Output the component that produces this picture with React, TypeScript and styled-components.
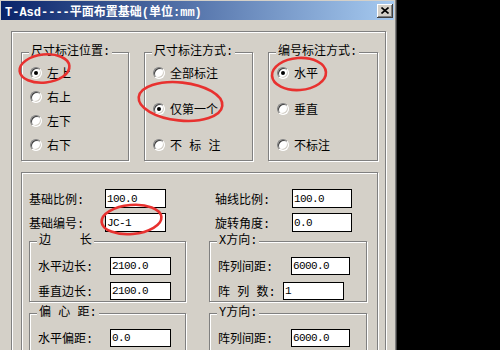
import React from 'react'
import styled, { createGlobalStyle, css } from 'styled-components'

const face = '#d4d0c8'

const etched = css`
	border: 1px solid #808080;
	box-shadow: inset 1px 1px 0 #fff, 1px 1px 0 #fff;
`

const GlobalStyle = createGlobalStyle`
	html, body {
		margin: 0;
		padding: 0;
		background: #000;
	}
	body {
		width: 500px;
		height: 350px;
		overflow: hidden;
		font-family: "Liberation Mono", "Noto Sans CJK SC", monospace;
		font-size: 12px;
		color: #000;
	}
`

const Window = styled.div`
	position: relative;
	box-sizing: border-box;
	width: 397px;
	height: 350px;
	padding: 1px 2px 0 1px;
	background: ${face};
	border-right: 1px solid #404040;
	box-shadow: inset -1px 0 0 #808080;
	overflow: hidden;
`

const TitleBar = styled.div`
	display: flex;
	align-items: center;
	justify-content: space-between;
	height: 19px;
	padding: 0 1px 0 4px;
	background: linear-gradient(to right, #0a246a, #a6caf0);
	color: #fff;
	font-weight: bold;
	white-space: pre;
`

const CloseButton = styled.div`
	box-sizing: border-box;
	display: flex;
	align-items: center;
	justify-content: center;
	width: 16px;
	height: 14px;
	background: ${face};
	box-shadow: inset -1px -1px 0 #404040, inset 1px 1px 0 #fff,
		inset -2px -2px 0 #808080;
`

const Panel = styled.div`
	box-sizing: border-box;
	width: 375px;
	height: 400px;
	margin: 11px 0 0 10px;
	padding: 20px 0 0 9px;
	${etched}
`

const TopRow = styled.div`
	display: grid;
	grid-template-columns: 108px 109px 110px;
	column-gap: 15px;
`

const GroupBox = styled.div<{ $h: number }>`
	position: relative;
	box-sizing: border-box;
	height: ${(p) => p.$h}px;
	${etched}
`

const Legend = styled.span`
	position: absolute;
	top: -9px;
	left: 7px;
	padding: 0 2px;
	line-height: 16px;
	background: ${face};
	white-space: pre;
`

const RadioList = styled.div`
	display: flex;
	flex-direction: column;
	justify-content: space-between;
	height: 96px;
	padding: 8px 0 0 8px;
`

const RadioRow = styled.div`
	display: flex;
	align-items: center;
	gap: 5px;
	height: 24px;
	white-space: pre;
`

const RadioDot = styled.span<{ $checked?: boolean }>`
	position: relative;
	box-sizing: border-box;
	width: 12px;
	height: 12px;
	border-radius: 50%;
	background: #fff;
	border: 1px solid;
	border-color: #808080 #fff #fff #808080;
	box-shadow: inset 1px 1px 0 #404040, inset -1px -1px 0 ${face};

	&::after {
		content: '';
		display: ${(p) => (p.$checked ? 'block' : 'none')};
		position: absolute;
		left: 3px;
		top: 3px;
		width: 4px;
		height: 4px;
		border-radius: 50%;
		background: #000;
	}
`

const LowerBox = styled.div`
	box-sizing: border-box;
	width: 357px;
	height: 200px;
	margin-top: 11px;
	padding: 16px 0 0 7px;
	${etched}
`

const FieldGrid = styled.div`
	display: grid;
	grid-template-columns: 76px 110px 77px 60px;
	row-gap: 5px;
	align-items: center;
	white-space: pre;
`

const SubGrid = styled.div`
	display: grid;
	grid-template-columns: 157px 158px;
	column-gap: 23px;
	row-gap: 11px;
	margin-top: 9px;
`

const SubRows = styled.div`
	display: flex;
	flex-direction: column;
	gap: 7px;
	padding: 15px 0 0 8px;
`

const SubRow = styled.div<{ $labelW: number }>`
	display: grid;
	grid-template-columns: ${(p) => p.$labelW}px auto;
	align-items: center;
	white-space: pre;
`

const Input = styled.div<{ $w: number; $h?: number }>`
	box-sizing: border-box;
	display: flex;
	align-items: center;
	width: ${(p) => p.$w}px;
	height: ${(p) => p.$h ?? 18}px;
	padding-left: 1px;
	background: #fff;
	border: 1px solid #000;
	font-family: "Liberation Mono", monospace;
	font-size: 11px;
	letter-spacing: -0.6px;
`

const Marks = styled.svg`
	position: absolute;
	left: 0;
	top: 0;
	pointer-events: none;
`

const Radio = ({ label, checked }: { label: string; checked?: boolean }) => (
	<RadioRow>
		<RadioDot $checked={checked} />
		<span>{label}</span>
	</RadioRow>
)

const Group = ({ title, children }: { title: string; children: React.ReactNode }) => (
	<GroupBox $h={109}>
		<Legend>{title}</Legend>
		<RadioList>{children}</RadioList>
	</GroupBox>
)

const SubGroup = ({ title, children }: { title: string; children: React.ReactNode }) => (
	<GroupBox $h={61}>
		<Legend>{title}</Legend>
		<SubRows>{children}</SubRows>
	</GroupBox>
)

const App = () => (
	<>
		<GlobalStyle />
		<Window>
			<TitleBar>
				<span>T-Asd----平面布置基础(单位:mm)</span>
				<CloseButton>
					<svg width="8" height="7" viewBox="0 0 8 7">
						<path d="M0.5 0.5 L7.5 6.5 M7.5 0.5 L0.5 6.5" stroke="#000" strokeWidth="1.6" />
					</svg>
				</CloseButton>
			</TitleBar>
			<Panel>
				<TopRow>
					<Group title="尺寸标注位置:">
						<Radio label="左上" checked />
						<Radio label="右上" />
						<Radio label="左下" />
						<Radio label="右下" />
					</Group>
					<Group title="尺寸标注方式:">
						<Radio label="全部标注" />
						<Radio label="仅第一个" checked />
						<Radio label="不 标 注" />
					</Group>
					<Group title="编号标注方式:">
						<Radio label="水平" checked />
						<Radio label="垂直" />
						<Radio label="不标注" />
					</Group>
				</TopRow>
				<LowerBox>
					<FieldGrid>
						<span>基础比例:</span>
						<Input $w={61} $h={19}>100.0</Input>
						<span>轴线比例:</span>
						<Input $w={60} $h={19}>100.0</Input>
						<span>基础编号:</span>
						<Input $w={61} $h={19}>JC-1</Input>
						<span>旋转角度:</span>
						<Input $w={60} $h={19}>0.0</Input>
					</FieldGrid>
					<SubGrid>
						<SubGroup title="边    长">
							<SubRow $labelW={72}>
								<span>水平边长:</span>
								<Input $w={61}>2100.0</Input>
							</SubRow>
							<SubRow $labelW={72}>
								<span>垂直边长:</span>
								<Input $w={61}>2100.0</Input>
							</SubRow>
						</SubGroup>
						<SubGroup title="X方向:">
							<SubRow $labelW={73}>
								<span>阵列间距:</span>
								<Input $w={59}>6000.0</Input>
							</SubRow>
							<SubRow $labelW={65}>
								<span>阵 列 数:</span>
								<Input $w={61}>1</Input>
							</SubRow>
						</SubGroup>
						<SubGroup title="偏 心 距:">
							<SubRow $labelW={72}>
								<span>水平偏距:</span>
								<Input $w={61}>0.0</Input>
							</SubRow>
						</SubGroup>
						<SubGroup title="Y方向:">
							<SubRow $labelW={73}>
								<span>阵列间距:</span>
								<Input $w={59}>6000.0</Input>
							</SubRow>
						</SubGroup>
					</SubGrid>
				</LowerBox>
			</Panel>
			<Marks width="397" height="350" viewBox="0 0 397 350">
				<g fill="none" stroke="#e8312f" strokeWidth="2.6">
					<ellipse cx="44.5" cy="68.5" rx="25" ry="14" transform="rotate(-6 44.5 68.5)" />
					<ellipse cx="180.5" cy="101.5" rx="42" ry="19" transform="rotate(6 180.5 101.5)" />
					<ellipse cx="299" cy="74" rx="27" ry="16" transform="rotate(-4 299 74)" />
					<ellipse cx="131.5" cy="219.5" rx="30" ry="14.5" transform="rotate(-5 131.5 219.5)" />
				</g>
			</Marks>
		</Window>
	</>
)

export default App
